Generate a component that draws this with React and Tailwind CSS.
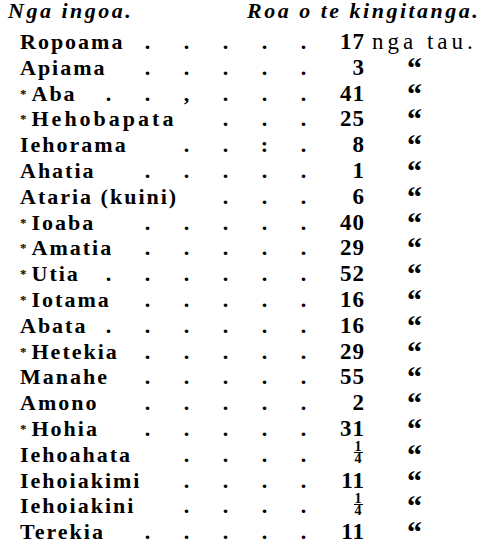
import React from 'react';

const rows = [
  { name: 'Ropoama', dots: [1, 2, 3, 4, 5], num: '17', unit: 'nga tau.' },
  { name: 'Apiama', dots: [1, 2, 3, 4, 5], num: '3' },
  { name: 'Aba', star: true, dots: [0, 1, 2, 3, 4, 5], marks: { 2: ',' }, num: '41' },
  { name: 'Hehobapata', star: true, wide: true, dots: [3, 4, 5], num: '25' },
  { name: 'Iehorama', dots: [2, 3, 4, 5], marks: { 4: ':' }, num: '8' },
  { name: 'Ahatia', dots: [1, 2, 3, 4, 5], num: '1' },
  { name: 'Ataria (kuini)', dots: [3, 4, 5], num: '6' },
  { name: 'Ioaba', star: true, dots: [1, 2, 3, 4, 5], num: '40' },
  { name: 'Amatia', star: true, dots: [1, 2, 3, 4, 5], num: '29' },
  { name: 'Utia', star: true, dots: [0, 1, 2, 3, 4, 5], num: '52' },
  { name: 'Iotama', star: true, dots: [1, 2, 3, 4, 5], num: '16' },
  { name: 'Abata', dots: [0, 1, 2, 3, 4, 5], num: '16' },
  { name: 'Hetekia', star: true, dots: [1, 2, 3, 4, 5], num: '29' },
  { name: 'Manahe', dots: [1, 2, 3, 4, 5], num: '55' },
  { name: 'Amono', dots: [1, 2, 3, 4, 5], num: '2' },
  { name: 'Hohia', star: true, dots: [1, 2, 3, 4, 5], num: '31' },
  { name: 'Iehoahata', dots: [2, 3, 4, 5], num: 'q' },
  { name: 'Iehoiakimi', dots: [2, 3, 4, 5], num: '11' },
  { name: 'Iehoiakini', dots: [2, 3, 4, 5], num: 'q' },
  { name: 'Terekia', dots: [1, 2, 3, 4, 5], num: '11' },
];

const Quarter = () => (
  <span className="inline-flex flex-col items-center align-middle text-[14px] leading-[11px] -mt-[8px] mr-[2px]">
    <span>1</span>
    <span className="block w-[9px] h-px bg-black"></span>
    <span>4</span>
  </span>
);

const App = () => {
  return (
    <div className="w-[482px] h-[552px] bg-white text-black overflow-hidden" style={{ fontFamily: '"Liberation Serif", "Times New Roman", serif' }}>
      <div className="grid grid-cols-[247px_auto] h-[31px] -mt-[2px] text-[22px] leading-[26px] italic font-bold tracking-[2.5px]">
        <div className="pl-[8px]">Nga ingoa.</div>
        <div className="whitespace-nowrap">Roa o te kingitanga.</div>
      </div>

      {rows.map((r) => (
        <div key={r.name} className="grid grid-cols-[89px_repeat(6,39px)_42px_auto] h-[25.8px] text-[22px] leading-[25.8px] font-bold">
          <div className={r.wide ? 'pl-[20px] whitespace-nowrap tracking-[3px]' : 'pl-[20px] whitespace-nowrap tracking-[2px]'}>
            {r.star && <span className="text-[13px] align-top mr-[5px] tracking-normal">*</span>}
            {r.name}
          </div>
          {[0, 1, 2, 3, 4, 5].map((i) => (
            <div key={i} className="text-center">
              {r.dots.includes(i) ? (r.marks && r.marks[i]) || '.' : ''}
            </div>
          ))}
          <div className="text-right text-[23px] tracking-[1px]">
            {r.num === 'q' ? <Quarter /> : r.num}
          </div>
          <div className="whitespace-nowrap">
            {r.unit ? (
              <span className="pl-[7px] font-normal text-[23px] tracking-[4px]">{r.unit}</span>
            ) : (
              <span className="relative top-[3px] ml-[42px] text-[30px] leading-[16px]">“</span>
            )}
          </div>
        </div>
      ))}
    </div>
  );
};

export default App;
